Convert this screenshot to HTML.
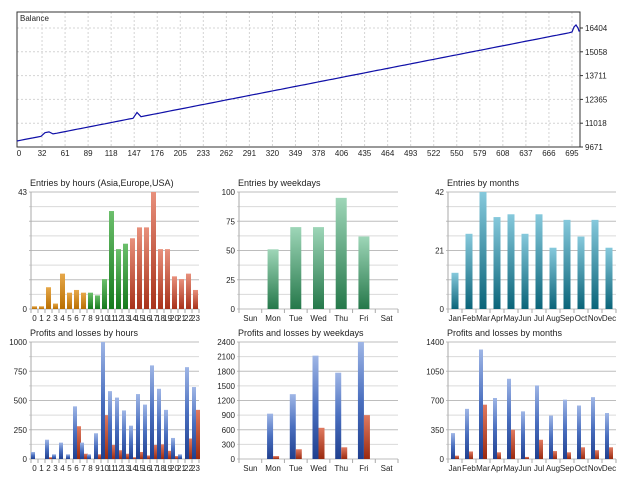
<!DOCTYPE html>
<html><head><meta charset="utf-8"><style>
html,body{margin:0;padding:0;background:#fff;width:640px;height:480px;overflow:hidden}
svg{display:block}
text{font-family:"Liberation Sans",Arial,sans-serif;fill:#222}
</style></head><body>
<svg id="s" width="640" height="480" xmlns="http://www.w3.org/2000/svg">
<defs>
<linearGradient id="gOr" x1="0" y1="0" x2="0" y2="1"><stop offset="0" stop-color="#e6a84a"/><stop offset="1" stop-color="#b96e00"/></linearGradient>
<linearGradient id="gGr" x1="0" y1="0" x2="0" y2="1"><stop offset="0" stop-color="#6cbf6c"/><stop offset="1" stop-color="#157a1c"/></linearGradient>
<linearGradient id="gRd" x1="0" y1="0" x2="0" y2="1"><stop offset="0" stop-color="#e8907c"/><stop offset="1" stop-color="#a8321a"/></linearGradient>
<linearGradient id="gWk" x1="0" y1="0" x2="0" y2="1"><stop offset="0" stop-color="#9ed6b8"/><stop offset="1" stop-color="#25784a"/></linearGradient>
<linearGradient id="gTl" x1="0" y1="0" x2="0" y2="1"><stop offset="0" stop-color="#86c9dc"/><stop offset="1" stop-color="#0a6479"/></linearGradient>
<linearGradient id="gBl" x1="0" y1="0" x2="0" y2="1"><stop offset="0" stop-color="#9fb6e6"/><stop offset="0.5" stop-color="#4a6fbf"/><stop offset="1" stop-color="#1f3f8f"/></linearGradient>
<linearGradient id="gRr" x1="0" y1="0" x2="0" y2="1"><stop offset="0" stop-color="#e07a60"/><stop offset="1" stop-color="#9a2a10"/></linearGradient>
</defs>
</svg>
<script>
var s=document.getElementById('s'),NS='http://www.w3.org/2000/svg';
function el(t,a,txt){var e=document.createElementNS(NS,t);for(var k in a)e.setAttribute(k,a[k]);if(txt!==undefined)e.textContent=txt;s.appendChild(e);return e;}
var L=17,R=580,T=12,B=147;
for(var i=1;i<6;i++){var y=B-i*23.8;el('line',{x1:L,x2:R,y1:y,y2:y,stroke:'#d4d4d4','stroke-dasharray':'2,2'});}
var xl=[0,32,61,89,118,147,176,205,233,262,291,320,349,378,406,435,464,493,522,550,579,608,637,666,695];
for(var i=0;i<xl.length;i++){var x=19+i*23.04;if(i>0)el('line',{x1:x,x2:x,y1:T,y2:B,stroke:'#d4d4d4','stroke-dasharray':'2,2'});el('text',{x:x,y:156,'font-size':8,'text-anchor':'middle'},xl[i]);}
var yl=['9671','11018','12365','13711','15058','16404'];
for(var i=0;i<6;i++){var y=B-i*23.8;el('line',{x1:R,x2:R+3,y1:y,y2:y,stroke:'#333'});el('text',{x:585,y:y+3,'font-size':8},yl[i]);}
el('rect',{x:L,y:T,width:R-L,height:B-T,fill:'none',stroke:'#333','stroke-width':1});
el('text',{x:20,y:21,'font-size':8},'Balance');
var pts=[];
function f(x){return 141-(x-17)*0.196;}
for(var x=17;x<=570;x+=4){pts.push([x,f(x)]);}
function bump(c,h,w){for(var i=0;i<pts.length;i++){var d=pts[i][0]-c;if(Math.abs(d)<w)pts[i][1]-=h*Math.cos(d/w*Math.PI/2);}}
bump(47,4,4);bump(137,5,4);
pts.push([572,32]);pts.push([574,27]);pts.push([576,25]);pts.push([578,28]);pts.push([579,31]);pts.push([580,31]);
el('polyline',{points:pts.map(function(p){return p[0]+','+p[1].toFixed(1)}).join(' '),fill:'none',stroke:'#1010a8','stroke-width':1.2});

function chart(o){
 var L=o.L,R=o.R,T=o.T,B=o.B,n=o.cats.length,w=(R-L)/n;
 el('text',{x:o.tx,y:T-6,'font-size':9,fill:'#333'},o.title);
 var g=o.grid||8;
 for(var i=0;i<=g;i++){var y=B-(B-T)*i/g;el('line',{x1:L-2,x2:R,y1:y,y2:y,stroke:i%2?'#dadada':'#bdbdbd'});}
 var steps=o.ylab.length-1;
 for(var i=0;i<=steps;i++){var y=B-(B-T)*i/steps;el('text',{x:L-4,y:y+3,'font-size':8,'text-anchor':'end'},o.ylab[i]);}
 el('line',{x1:L,x2:L,y1:T,y2:B+3,stroke:'#aaa'});
 for(var i=0;i<=n;i++){var x=L+i*w;el('line',{x1:x,x2:x,y1:B,y2:B+4,stroke:'#aaa'});}
 for(var i=0;i<n;i++){
  var cx=L+w*(i+0.5);
  el('text',{x:cx,y:B+12,'font-size':o.lf||8,'text-anchor':'middle'},o.cats[i]);
  for(var k=0;k<o.series.length;k++){
   var sr=o.series[k],v=sr.v[i];if(!v)continue;var h=(B-T)*v/o.max;
   el('rect',{x:cx+sr.off,y:B-h,width:sr.bw,height:h,fill:typeof sr.c=='function'?sr.c(i):sr.c});
  }
 }
}
var hrs=[];for(var i=0;i<24;i++)hrs.push(i);
chart({L:31,R:199,T:192,B:309,tx:30,title:'Entries by hours (Asia,Europe,USA)',ylab:['0','43'],max:43,cats:hrs,
 series:[{v:[1,1,8,2,13,6,7,6,6,5,11,36,22,24,26,30,30,43,22,22,12,11,13,7],off:-2.5,bw:5,c:function(i){return i<8?'url(#gOr)':i<14?'url(#gGr)':'url(#gRd)';}}]});
var wd=['Sun','Mon','Tue','Wed','Thu','Fri','Sat'];
chart({L:239,R:398,T:192,B:309,tx:238,title:'Entries by weekdays',ylab:['0','25','50','75','100'],max:100,cats:wd,
 series:[{v:[0,51,70,70,95,62,0],off:-5.5,bw:11,c:'url(#gWk)'}]});
var mo=['Jan','Feb','Mar','Apr','May','Jun','Jul','Aug','Sep','Oct','Nov','Dec'];
chart({L:448,R:616,T:192,B:309,tx:447,title:'Entries by months',ylab:['0','21','42'],max:42,cats:mo,
 series:[{v:[13,27,42,33,34,27,34,22,32,26,32,22],off:-3.5,bw:7,c:'url(#gTl)'}]});
chart({L:31,R:199,T:342,B:459,tx:30,title:'Profits and losses by hours',ylab:['0','250','500','750','1000'],max:1000,cats:hrs,
 series:[{v:[60,0,165,40,140,40,450,140,40,220,1000,580,525,415,285,555,465,800,600,420,180,40,785,615],off:-3.5,bw:4,c:'url(#gBl)'},
 {v:[0,0,15,0,0,0,280,45,0,40,375,120,75,45,15,60,30,120,125,70,25,0,175,420],off:0.5,bw:4,c:'url(#gRr)'}]});
chart({L:239,R:398,T:342,B:459,tx:238,title:'Profits and losses by weekdays',ylab:['0','300','600','900','1200','1500','1800','2100','2400'],max:2400,cats:wd,
 series:[{v:[0,930,1330,2120,1770,2400,0],off:-6,bw:6,c:'url(#gBl)'},{v:[0,60,200,640,240,900,0],off:0,bw:6,c:'url(#gRr)'}]});
chart({L:448,R:616,T:342,B:459,tx:447,title:'Profits and losses by months',ylab:['0','350','700','1050','1400'],max:1400,cats:mo,
 series:[{v:[310,600,1310,730,960,570,880,520,710,640,740,550],off:-4,bw:4,c:'url(#gBl)'},{v:[40,90,650,80,350,25,230,95,80,140,105,140],off:0,bw:4,c:'url(#gRr)'}]});
</script>
</body></html>
